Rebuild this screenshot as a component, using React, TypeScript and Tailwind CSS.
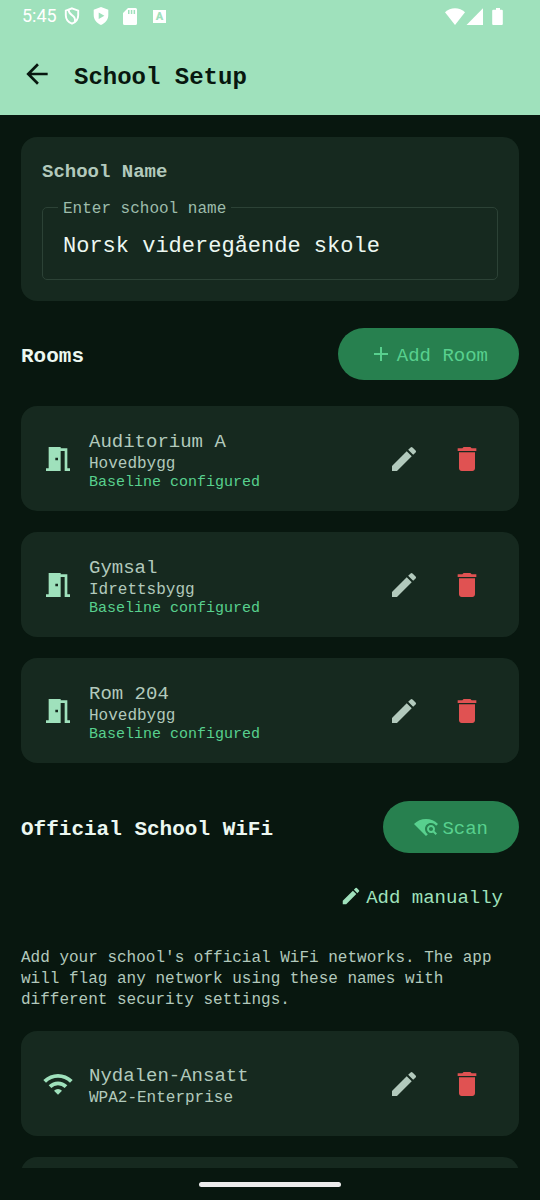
import { useState, type ReactNode } from "react";
import {
  MdAdd,
  MdArrowBack,
  MdDelete,
  MdEdit,
  MdMeetingRoom,
  MdWifi,
  MdWifiFind,
} from "react-icons/md";

interface Room {
  name: string;
  building: string;
}

interface Network {
  ssid: string;
  security: string;
}

const rooms: Room[] = [
  { name: "Auditorium A", building: "Hovedbygg" },
  { name: "Gymsal", building: "Idrettsbygg" },
  { name: "Rom 204", building: "Hovedbygg" },
];

const networks: Network[] = [{ ssid: "Nydalen-Ansatt", security: "WPA2-Enterprise" }];

function StatusBar() {
  return (
    <div className="flex h-8 items-center justify-between pl-[22px] pr-9 text-white">
      <div className="flex items-center">
        <span className="w-[42px] font-['Roboto',sans-serif] text-lg">5:45</span>
        <svg className="h-[18px] w-4" viewBox="0 0 16 18" fill="none" stroke="currentColor">
          <path
            d="M8 1.3 14.2 3.6v4.6c0 4-2.6 7-6.2 8.5-3.6-1.5-6.2-4.5-6.2-8.5V3.6z"
            strokeWidth="1.9"
          />
          <path d="M4.6 2.8c0 3 1.4 4.2 3.6 5.6s3.4 3.2 2.6 6.6" strokeWidth="1.9" />
        </svg>
        <svg className="ml-[13px] h-[18px] w-4" viewBox="0 0 16 18" fill="currentColor">
          <path
            fillRule="evenodd"
            d="M8 0l7.3 2.8v5.3c0 4.5-3 8.3-7.3 9.9C3.7 16.4.7 12.6.7 8.1V2.8zM5.7 5.6v6.4L11.4 8.8z"
          />
        </svg>
        <svg className="ml-3.5 h-[17px] w-[14px]" viewBox="0 0 14 17" fill="currentColor">
          <path
            fillRule="evenodd"
            d="M5 0h7.5A1.5 1.5 0 0 1 14 1.5v14a1.5 1.5 0 0 1-1.5 1.5h-11A1.5 1.5 0 0 1 0 15.500V5zM5 2v4h1.500V2zM7.800 2v4h1.500V2zM10.600 2v4h1.500V2z"
          />
        </svg>
        <span className="ml-4 flex size-[13px] items-center justify-center bg-white font-['Roboto',sans-serif] text-[11px] leading-none font-black text-[#9fe1bc]">
          A
        </span>
      </div>
      <svg className="h-[17px] w-[60px]" viewBox="0 0 60 17" fill="currentColor">
        <path d="M11 17 1 4.2C3.8 1.7 7.2.3 11 .3s7.2 1.4 10 3.9z" />
        <path d="M39 .3V17H22.5z" />
        <path d="M52 0h4v1.8h1.8a1 1 0 0 1 1 1V16a1 1 0 0 1-1 1h-8.6a1 1 0 0 1-1-1V2.8a1 1 0 0 1 1-1H52z" />
      </svg>
    </div>
  );
}

interface ItemCardProps {
  icon: ReactNode;
  title: string;
  subtitle: string;
  status?: string;
}

function ItemCard({ icon, title, subtitle, status }: ItemCardProps) {
  return (
    <li className="flex h-[105px] items-center rounded-2xl bg-[#16291f] px-[21px]">
      <span className="text-[32px] text-[#9fe1bc]">{icon}</span>
      <div className="ml-[15px] flex-1 pt-1 text-[#b2c9bc]">
        <div className="text-[19px] leading-6">{title}</div>
        <div className="text-base leading-5">{subtitle}</div>
        {status && <div className="text-[15px] leading-[18px] text-[#58d08e]">{status}</div>}
      </div>
      <button
        type="button"
        aria-label={`Edit ${title}`}
        className="flex size-[63px] items-center justify-center text-[32px] text-[#b2c9bc]"
      >
        <MdEdit />
      </button>
      <button
        type="button"
        aria-label={`Delete ${title}`}
        className="flex size-[63px] items-center justify-center text-[32px] text-[#e05252]"
      >
        <MdDelete />
      </button>
    </li>
  );
}

function PillButton({ icon, children }: { icon: ReactNode; children: ReactNode }) {
  return (
    <button
      type="button"
      className="flex h-[52px] items-center gap-1 rounded-full bg-[#27804f] px-[31px] text-[19px] text-[#58d08e]"
    >
      <span className="text-2xl">{icon}</span>
      <span className="pt-1">{children}</span>
    </button>
  );
}

export default function App() {
  const [schoolName, setSchoolName] = useState("Norsk videregående skole");

  return (
    <div className="flex h-screen flex-col bg-[#08170f] font-['Liberation_Mono',monospace]">
      <header className="bg-[#9fe1bc] pb-[21px]">
        <StatusBar />
        <div className="flex h-[62px] items-end gap-[21px] px-[21px] pt-5 text-[#08170f]">
          <button type="button" aria-label="Back" className="pb-1 text-[32px]">
            <MdArrowBack />
          </button>
          <h1 className="text-2xl leading-8 font-bold">School Setup</h1>
        </div>
      </header>

      <main className="min-h-0 flex-1 overflow-y-auto px-[21px] pt-[22px] [scrollbar-width:none]">
        <section className="rounded-2xl bg-[#16291f] p-[21px]">
          <h2 className="text-[19px] leading-7 font-bold text-[#b2c9bc]">School Name</h2>
          <div className="relative mt-[21px]">
            <label
              htmlFor="school-name"
              className="absolute -top-2 left-4 bg-[#16291f] px-[5px] text-base leading-5 text-[#9dbcab]"
            >
              Enter school name
            </label>
            <input
              id="school-name"
              type="text"
              value={schoolName}
              onChange={(e) => setSchoolName(e.target.value)}
              className="h-[73px] w-full rounded-[5px] border border-[#2c4236] bg-transparent px-5 pt-1.5 text-[22px] text-[#ecf8f1] outline-none"
            />
          </div>
        </section>

        <div className="mt-[27px] flex items-center justify-between">
          <h2 className="pt-1.5 text-[21px] font-bold text-[#ecf8f1]">Rooms</h2>
          <PillButton icon={<MdAdd />}>Add Room</PillButton>
        </div>
        <ul className="mt-[26px] flex flex-col gap-[21px]">
          {rooms.map((room) => (
            <ItemCard
              key={room.name}
              icon={<MdMeetingRoom />}
              title={room.name}
              subtitle={room.building}
              status="Baseline configured"
            />
          ))}
        </ul>

        <div className="mt-[38px] flex items-center justify-between">
          <h2 className="pt-1.5 text-[21px] font-bold text-[#ecf8f1]">Official School WiFi</h2>
          <PillButton icon={<MdWifiFind />}>Scan</PillButton>
        </div>
        <div className="mt-[17px] flex justify-end">
          <button
            type="button"
            className="flex h-[52px] items-center gap-1 px-4 text-[19px] text-[#9fe1bc]"
          >
            <MdEdit className="text-[22px]" />
            <span className="pt-1">Add manually</span>
          </button>
        </div>
        <p className="mt-[26px] text-base leading-[21px] text-[#b2c9bc]">
          Add your school's official WiFi networks. The app will flag any network using these names
          with different security settings.
        </p>
        <ul className="mt-5 flex flex-col gap-[21px]">
          {networks.map((network) => (
            <ItemCard
              key={network.ssid}
              icon={<MdWifi />}
              title={network.ssid}
              subtitle={network.security}
            />
          ))}
          <li className="h-[105px] rounded-2xl bg-[#16291f]" />
        </ul>
      </main>

      <div className="flex h-8 shrink-0 items-center justify-center">
        <div className="h-[5px] w-[142px] rounded-full bg-[#ececec]" />
      </div>
    </div>
  );
}
